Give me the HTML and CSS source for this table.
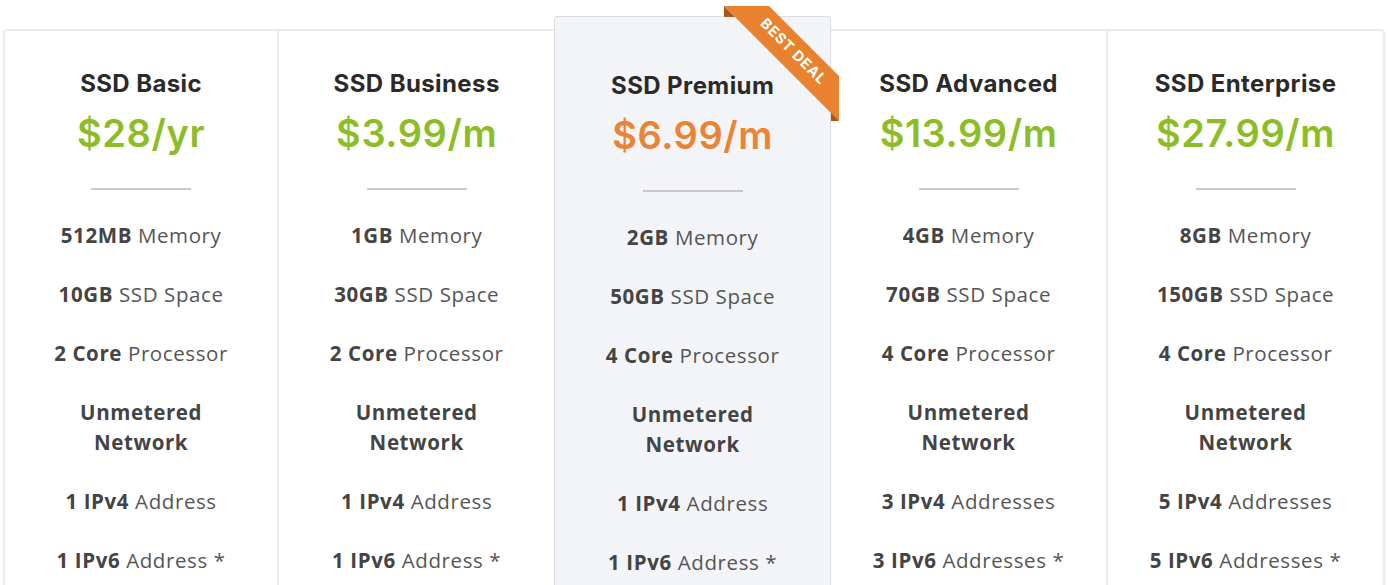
FILE: index.html
```html
<!DOCTYPE html>
<html>
<head>
<meta charset="utf-8">
<link rel="stylesheet" href="styles.css">
</head>
<body>
<div class="table">
  <div class="plan">
    <h2 class="name">SSD Basic</h2>
    <div class="price">$28/yr</div>
    <div class="divider"></div>
    <ul class="features">
      <li><b>512MB</b> Memory</li>
      <li><b>10GB</b> SSD Space</li>
      <li><b>2 Core</b> Processor</li>
      <li><b>Unmetered<br>Network</b></li>
      <li><b>1 IPv4</b> Address</li>
      <li><b>1 IPv6</b> Address *</li>
    </ul>
  </div>
  <div class="plan">
    <h2 class="name">SSD Business</h2>
    <div class="price">$3.99/m</div>
    <div class="divider"></div>
    <ul class="features">
      <li><b>1GB</b> Memory</li>
      <li><b>30GB</b> SSD Space</li>
      <li><b>2 Core</b> Processor</li>
      <li><b>Unmetered<br>Network</b></li>
      <li><b>1 IPv4</b> Address</li>
      <li><b>1 IPv6</b> Address *</li>
    </ul>
  </div>
  <div class="plan featured">
    <svg class="ribbon" width="115" height="115" viewBox="0 0 115 115">
      <polygon points="0,0 0,11 11,11" fill="#a9581b"/>
      <polygon points="107,105 115,115 107,115" fill="#a9581b"/>
      <polygon points="0,0 45,0 115,70 115,115" fill="#e8822e"/>
      <text x="0" y="0" transform="translate(70,45) rotate(45)" text-anchor="middle" dominant-baseline="central" class="ribbon-text">BEST DEAL</text>
    </svg>
    <h2 class="name">SSD Premium</h2>
    <div class="price">$6.99/m</div>
    <div class="divider"></div>
    <ul class="features">
      <li><b>2GB</b> Memory</li>
      <li><b>50GB</b> SSD Space</li>
      <li><b>4 Core</b> Processor</li>
      <li><b>Unmetered<br>Network</b></li>
      <li><b>1 IPv4</b> Address</li>
      <li><b>1 IPv6</b> Address *</li>
    </ul>
  </div>
  <div class="plan">
    <h2 class="name">SSD Advanced</h2>
    <div class="price">$13.99/m</div>
    <div class="divider"></div>
    <ul class="features">
      <li><b>4GB</b> Memory</li>
      <li><b>70GB</b> SSD Space</li>
      <li><b>4 Core</b> Processor</li>
      <li><b>Unmetered<br>Network</b></li>
      <li><b>3 IPv4</b> Addresses</li>
      <li><b>3 IPv6</b> Addresses *</li>
    </ul>
  </div>
  <div class="plan">
    <h2 class="name">SSD Enterprise</h2>
    <div class="price">$27.99/m</div>
    <div class="divider"></div>
    <ul class="features">
      <li><b>8GB</b> Memory</li>
      <li><b>150GB</b> SSD Space</li>
      <li><b>4 Core</b> Processor</li>
      <li><b>Unmetered<br>Network</b></li>
      <li><b>5 IPv4</b> Addresses</li>
      <li><b>5 IPv6</b> Addresses *</li>
    </ul>
  </div>
</div>
</body>
</html>
```

FILE: styles.css
```css
html, body {
  margin: 0;
  padding: 0;
  background: #ffffff;
  overflow: hidden;
}

body {
  padding: 29px 3px 0 3px;
  height: 585px;
  box-sizing: border-box;
}

.table {
  display: flex;
  height: 600px;
  border: 2px solid #ebebeb;
  border-bottom: none;
  border-radius: 4px 4px 0 0;
  background: #fff;
}

.plan {
  flex: 1 1 0;
  box-sizing: border-box;
  position: relative;
  text-align: center;
  padding-top: 38px;
  border-left: 2px solid #ebebeb;
}

.plan:first-child {
  border-left: none;
  flex-grow: 0.99;
}

.plan.featured {
  margin-top: -15px;
  padding-top: 54px;
  background: #f3f4f8;
  border: 1px solid #dcdde2;
  border-bottom: none;
  border-radius: 3px 3px 0 0;
  z-index: 2;
}

.plan.featured + .plan {
  border-left: none;
}

.ribbon {
  position: absolute;
  top: -11px;
  right: -9px;
  overflow: visible;
}

.ribbon-text {
  font-family: "Inter", "Liberation Sans", sans-serif;
  font-weight: 700;
  font-size: 14.5px;
  fill: #ffffff;
  letter-spacing: 0.8px;
}

.name {
  margin: 0;
  font-family: "Inter", "Liberation Sans", sans-serif;
  font-weight: 700;
  font-size: 24px;
  line-height: 30px;
  letter-spacing: 0.4px;
  color: #2a2a2a;
}

.price {
  margin-top: 12px;
  font-family: "Inter", "Liberation Sans", sans-serif;
  font-weight: 600;
  font-size: 38px;
  line-height: 44px;
  letter-spacing: 0.6px;
  color: #8dbd26;
}

.featured .price {
  color: #ea8434;
}

.divider {
  width: 100px;
  height: 2px;
  margin: 33px auto 0;
  background: #c9c9c9;
}

.features {
  list-style: none;
  margin: 30px 0 0;
  padding: 0;
  font-family: "Open Sans", "Liberation Sans", sans-serif;
  font-size: 20.5px;
  line-height: 30px;
  letter-spacing: 0.6px;
  color: #555;
}

.features li {
  margin-bottom: 29px;
}

.features b {
  font-weight: 700;
  color: #444;
}
```
